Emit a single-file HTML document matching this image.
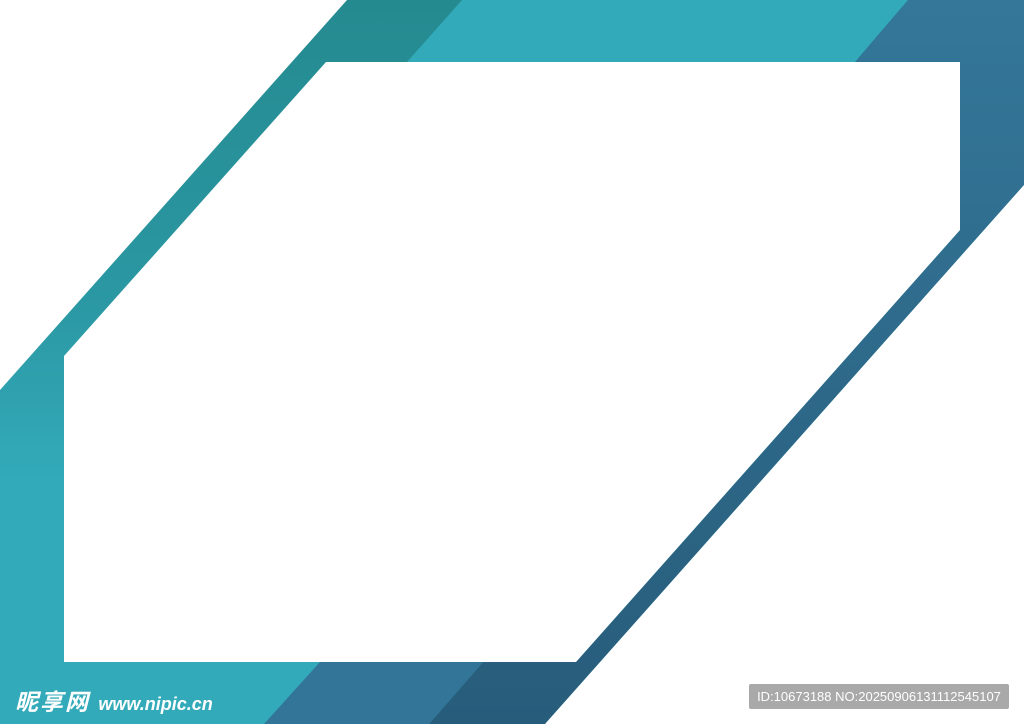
<!DOCTYPE html>
<html><head><meta charset="utf-8"><style>
html,body{margin:0;padding:0;width:1024px;height:724px;overflow:hidden;background:#fff}
svg{position:absolute;left:0;top:0}
.logo{position:absolute;left:15px;top:683px;color:#fff;font:italic bold 23px "Liberation Sans","Noto Sans CJK SC",sans-serif;letter-spacing:2px}
.logo span{font-size:18px;letter-spacing:0}
.id{position:absolute;left:749px;top:684px;width:260px;height:25px;background:#a9a9a9;border-radius:2px;color:#fff;font:13px "Liberation Sans",sans-serif;line-height:25px;text-align:center}
</style></head><body>
<svg width="1024" height="724" viewBox="0 0 1024 724">
<defs>
<linearGradient id="lt" gradientUnits="userSpaceOnUse" x1="0" y1="0" x2="0" y2="480">
<stop offset="0" stop-color="#258a90"/><stop offset="0.6" stop-color="#2a97a2"/><stop offset="1" stop-color="#33aab9"/></linearGradient>
<linearGradient id="rb" gradientUnits="userSpaceOnUse" x1="0" y1="0" x2="0" y2="724">
<stop offset="0" stop-color="#347799"/><stop offset="1" stop-color="#285c7b"/></linearGradient>
</defs>
<polygon points="347,0 1024,0 1024,724 0,724 0,390" fill="url(#lt)"/>
<polygon points="462,0 908,0 855,62 407,62" fill="#32aab9"/>
<polygon points="908,0 1024,0 1024,185 545,724 429,724 483,662 576,662 960,230 960,62 855,62" fill="url(#rb)"/>
<polygon points="320,662 483,662 429,724 264,724" fill="#337598"/>
<polygon points="1024,185 1024,724 545,724" fill="#fff"/>
<polygon points="326,62 960,62 960,230 576,662 64,662 64,356" fill="#fff"/>
</svg>
<div class="logo">昵享网 <span>www.nipic.cn</span></div>
<div class="id">ID:10673188 NO:20250906131112545107</div>
</body></html>
